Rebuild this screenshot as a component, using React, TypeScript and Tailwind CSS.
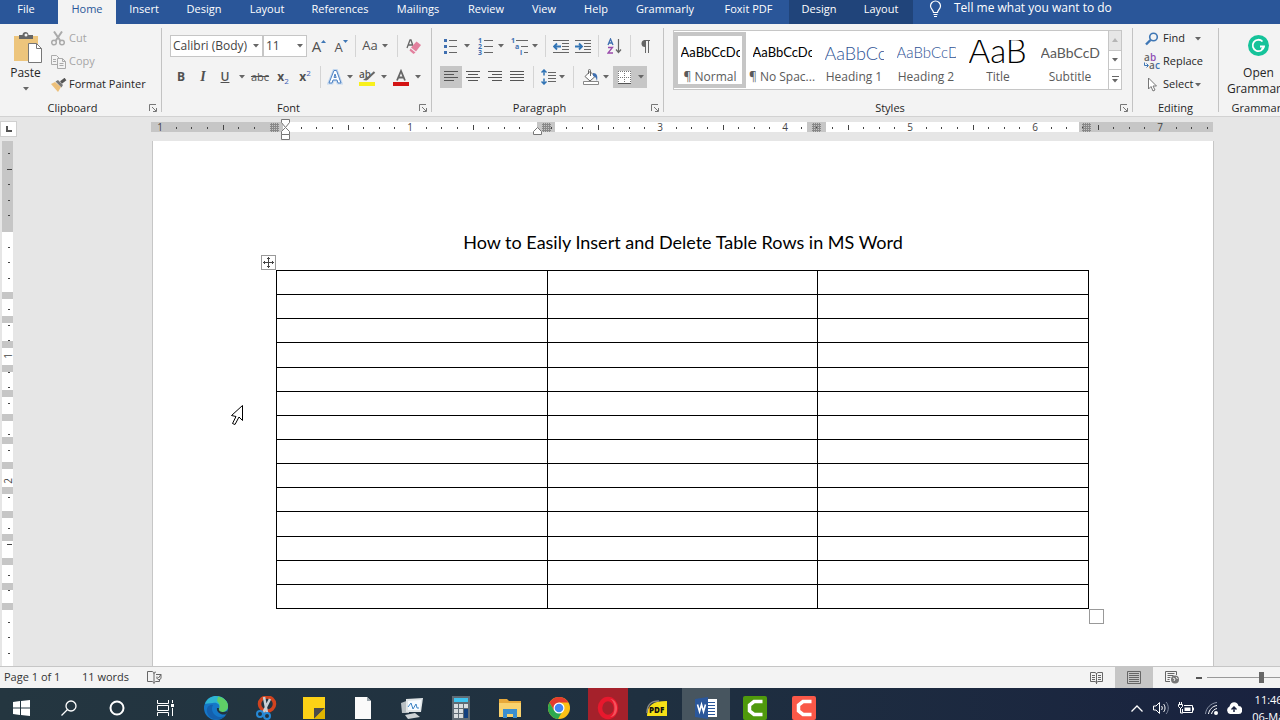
import type { ReactNode } from "react";
import clsx from "clsx";

const tabs = [
  { label: "File", width: "w-[52px]" },
  { label: "Home", width: "w-[58px] ml-1.5", active: true },
  { label: "Insert", width: "w-14" },
  { label: "Design", width: "w-16" },
  { label: "Layout", width: "w-[62px]" },
  { label: "References", width: "w-[84px]" },
  { label: "Mailings", width: "w-[72px]" },
  { label: "Review", width: "w-16" },
  { label: "View", width: "w-[52px]" },
  { label: "Help", width: "w-[52px]" },
  { label: "Grammarly", width: "w-[86px]" },
  { label: "Foxit PDF", width: "w-[81px]" },
];

const toolTabs = [
  { label: "Design", width: "w-[60px]" },
  { label: "Layout", width: "w-16" },
];

const styles = [
  { name: "¶ Normal", preview: "AaBbCcDc", look: "text-[13px] text-black", active: true },
  { name: "¶ No Spac...", preview: "AaBbCcDc", look: "text-[13px] text-black" },
  { name: "Heading 1", preview: "AaBbCc", look: "text-[18px] font-light text-[#2f5496]" },
  { name: "Heading 2", preview: "AaBbCcD", look: "text-[15px] font-light text-[#2f5496]" },
  { name: "Title", preview: "AaB", look: "pb-1.5 text-[33px] font-light text-black" },
  { name: "Subtitle", preview: "AaBbCcD", look: "text-[14px] text-[#5a5a5a]" },
];

const INCH = 125;

function Caret({ className }: { className?: string }) {
  return (
    <svg width="6" height="4" viewBox="0 0 6 4" className={className} aria-hidden="true">
      <path d="M0 0h6L3 3.6z" fill="#666" />
    </svg>
  );
}

function CaretButton({ label, width = "w-2" }: { label: string; width?: string }) {
  return (
    <button aria-label={label} className={clsx("flex h-full items-center justify-center", width)}>
      <Caret />
    </button>
  );
}

function Tool({
  label,
  width = "w-[22px]",
  active,
  children,
}: {
  label: string;
  width?: string;
  active?: boolean;
  children: ReactNode;
}) {
  return (
    <button
      aria-label={label}
      className={clsx(
        "flex h-full shrink-0 items-center justify-center text-xs text-[#505050]",
        width,
        active && "bg-[#c6c6c6]",
      )}
    >
      {children}
    </button>
  );
}

function Divider({ width = "w-2" }: { width?: string }) {
  return (
    <div className={clsx("flex h-full justify-center", width)}>
      <div className="w-px bg-[#d4d4d4]" />
    </div>
  );
}

function Group({
  title,
  width,
  launcher,
  children,
}: {
  title: string;
  width: string;
  launcher?: boolean;
  children: ReactNode;
}) {
  return (
    <section aria-label={title} className={clsx("flex h-full shrink-0", width)}>
      <div className="flex min-w-0 flex-1 flex-col">
        <div className="h-[76px]">{children}</div>
        <div className="flex h-4 items-center">
          <span className="flex-1 text-center whitespace-nowrap text-[#262626]">{title}</span>
          {launcher && (
            <button aria-label={`${title} settings`} className="flex w-4 justify-center">
              <svg width="9" height="9" viewBox="0 0 9 9" fill="none" stroke="#777">
                <path d="M.5 7V.5H7M3 3l4 4M7.5 4v3.5H4" />
              </svg>
            </button>
          )}
        </div>
      </div>
      <div className="my-1 w-px bg-[#c3c3c3]" />
    </section>
  );
}

function Lines({ rows }: { rows: [number, number][] }) {
  return (
    <svg width="16" height="12" viewBox="0 0 16 12" stroke="#555" aria-hidden="true">
      {rows.map(([from, to], i) => (
        <path key={i} d={`M${from} ${i * 3 + 0.5}H${to}`} />
      ))}
    </svg>
  );
}

function Combo({ label, value, width }: { label: string; value: string; width: string }) {
  return (
    <div className={clsx("relative h-[22px] text-xs", width)}>
      <select
        aria-label={label}
        className="h-full w-full appearance-none border border-[#c6c6c6] bg-white pl-0.5 text-[#444]"
      >
        <option>{value}</option>
      </select>
      <Caret className="pointer-events-none absolute top-[9px] right-1" />
    </div>
  );
}

function TabBar() {
  return (
    <nav className="flex h-6 shrink-0 overflow-hidden bg-[#2a5699] text-[11px] text-white">
      {tabs.map((tab) => (
        <button
          key={tab.label}
          className={clsx(
            "h-6 shrink-0 pb-[5px] text-center",
            tab.width,
            tab.active && "bg-[#f3f3f3] text-[#2a5699]",
          )}
        >
          {tab.label}
        </button>
      ))}
      <div className="flex bg-[#20447a]">
        {toolTabs.map((tab) => (
          <button key={tab.label} className={clsx("h-6 pb-[5px] text-center", tab.width)}>
            {tab.label}
          </button>
        ))}
      </div>
      <button className="flex h-6 items-start gap-3 pl-4 text-xs">
        <svg width="13" height="18" viewBox="0 0 13 18" fill="none" stroke="#fff" strokeWidth="1.200">
          <path d="M4.500 12.500c0-2.500-3-3.500-3-6.500a5 5 0 0 1 10 0c0 3-3 4-3 6.500zM4.500 14.500h4M5 16.500h3" />
        </svg>
        <span>Tell me what you want to do</span>
      </button>
    </nav>
  );
}

function Clipboard() {
  return (
    <Group title="Clipboard" width="w-[162px]" launcher>
      <div className="flex pt-[3px]">
        <button className="flex w-[51px] flex-col items-center pt-1 text-[#262626]">
          <svg width="30" height="32" viewBox="0 0 30 32" className="ml-0.5">
            <path d="M2 5h24v25H2z" fill="#edc57c" />
            <path d="M7 8V4h3.500c0-4 6-4 6 0H21v4z" fill="#666" />
            <circle cx="14" cy="4" r="1.500" fill="#f3f3f3" />
            <path d="M16.500 12.500h8l5 5v14h-13z" fill="#fff" stroke="#777" />
            <path d="M24.500 12.500v5h5" fill="none" stroke="#777" />
          </svg>
          <span className="mt-0.5 text-xs leading-4">Paste</span>
          <Caret className="mt-1.5" />
        </button>
        <div className="flex flex-col text-[#a6a6a6]">
          <button className="flex h-[23px] items-center gap-1">
            <svg width="14" height="15" viewBox="0 0 14 15" fill="none" stroke="#aaa" strokeWidth="1.500">
              <path d="M3 .5l6.500 9.500M11 .5L4.500 10" strokeWidth="2" />
              <circle cx="3" cy="11.500" r="2.300" />
              <circle cx="11" cy="11.500" r="2.300" />
            </svg>
            Cut
          </button>
          <button className="flex h-[23px] items-center gap-[3px]">
            <svg width="15" height="14" viewBox="0 0 15 14" fill="#f3f3f3" stroke="#aaa">
              <path d="M.5.5h5l3 3v6h-8zM2 4.500h3M2 6.500h3" />
              <path d="M6.500 3.500h5l3 3v7h-8zM11.500 3.500v3h3M8.500 8.500h4M8.500 10.500h4" />
            </svg>
            Copy
          </button>
          <button className="flex h-[23px] items-center gap-0.5 text-[#262626]">
            <svg width="16" height="14" viewBox="0 0 16 14">
              <path d="M0 6l4-2 6 5-3 5z" fill="#edc07a" />
              <path d="M4.500 3.500L7 2l5 5-1.500 2.500z" fill="#777" />
              <path d="M10 4.500L14.500 1" stroke="#555" strokeWidth="3" />
            </svg>
            Format Painter
          </button>
        </div>
      </div>
    </Group>
  );
}

function FontGroup() {
  return (
    <Group title="Font" width="w-[270px]" launcher>
      <div className="flex flex-col gap-[9px] pt-[11px] pl-2">
        <div className="flex h-[22px] items-center">
          <Combo label="Font" value="Calibri (Body)" width="w-[93px]" />
          <Combo label="Font size" value="11" width="w-11" />
          <Tool label="Grow font" width="w-6">
            <span className="text-[15px]">A</span>
            <svg width="5" height="14" viewBox="0 0 5 14">
              <path d="M0 4h5L2.500 1z" fill="#3f77b5" />
            </svg>
          </Tool>
          <Tool label="Shrink font" width="w-5">
            <span className="pt-1 text-[13px]">A</span>
            <svg width="5" height="14" viewBox="0 0 5 14">
              <path d="M0 1h5L2.500 4z" fill="#3f77b5" />
            </svg>
          </Tool>
          <Divider />
          <Tool label="Change case">
            <span className="text-[13px]">Aa</span>
          </Tool>
          <CaretButton label="Change case options" />
          <Divider width="w-4" />
          <Tool label="Clear formatting" width="w-4">
            <svg width="15" height="15" viewBox="0 0 15 15">
              <path d="M1 9l3-8h1l2 6M2 6h4" fill="none" stroke="#666" strokeWidth="1.300" />
              <path d="M10.500 2.500L15 6l-5 6.500-5-4z" fill="#e27f9d" />
              <path d="M4.500 9.500l5 4-2 1.500-4-3.500z" fill="#e27f9d" />
            </svg>
          </Tool>
        </div>
        <div className="flex h-[22px] items-center">
          <Tool label="Bold">
            <b>B</b>
          </Tool>
          <Tool label="Italic">
            <span className="font-['Liberation_Serif',serif] text-sm font-bold italic">I</span>
          </Tool>
          <Tool label="Underline">
            <span className="font-semibold underline">U</span>
          </Tool>
          <CaretButton label="Underline style" width="w-3" />
          <Tool label="Strikethrough" width="w-6">
            <span className="text-[11px] line-through">abc</span>
          </Tool>
          <Tool label="Subscript">
            <b>x</b>
            <span className="pt-2 text-[8px] text-[#3f60b5]">2</span>
          </Tool>
          <Tool label="Superscript">
            <b>x</b>
            <span className="pb-2 text-[8px] text-[#3f60b5]">2</span>
          </Tool>
          <Divider />
          <Tool label="Text effects">
            <svg width="16" height="16" viewBox="0 0 16 16">
              <path d="M7 1.500h2.500L14 14h-3l-1-3H6l-1 3H2zM8 5L7 8.500h2.200z" fill="none" stroke="#c3d7ee" strokeWidth="3" />
              <path d="M7 1.500h2.500L14 14h-3l-1-3H6l-1 3H2zM8 5L7 8.500h2.200z" fill="#fff" stroke="#4f83c4" />
            </svg>
          </Tool>
          <CaretButton label="Text effects options" />
          <Tool label="Text highlight color" width="w-[26px]">
            <svg width="17" height="17" viewBox="0 0 17 17">
              <text x="0" y="9" fontSize="10" fontWeight="600" fill="#555">ab</text>
              <path d="M15.500 3L8 10" stroke="#666" strokeWidth="2" />
              <path d="M4 11l4-3 1.500 2-2 1.500z" fill="#666" />
              <path d="M0 13h16v4H0z" fill="#f8f01c" />
            </svg>
          </Tool>
          <CaretButton label="Highlight options" />
          <Tool label="Font color" width="w-[26px]">
            <svg width="16" height="17" viewBox="0 0 16 17">
              <path d="M4 11.500L8 2l4 9.500M5.500 8.500h5" fill="none" stroke="#666" strokeWidth="1.800" />
              <path d="M0 13h16v4H0z" fill="#d31414" />
            </svg>
          </Tool>
          <CaretButton label="Font color options" />
        </div>
      </div>
    </Group>
  );
}

function Paragraph() {
  return (
    <Group title="Paragraph" width="w-[232px]" launcher>
      <div className="flex flex-col gap-[9px] pt-[11px] pl-2">
        <div className="flex h-[22px] items-center">
          <Tool label="Bullets">
            <svg width="14" height="16" viewBox="0 0 14 16">
              <path d="M5 2.500h8M5 8.500h8M5 14.500h8" stroke="#666" />
              <path d="M0 1h3v3H0zM0 7h3v3H0zM0 13h3v3H0z" fill="#3f6fb0" />
            </svg>
          </Tool>
          <CaretButton label="Bullet library" width="w-2.5 mr-0.5" />
          <Tool label="Numbering">
            <svg width="15" height="17" viewBox="0 0 15 17">
              <path d="M6 2.500h9M6 8.500h9M6 14.500h9" stroke="#666" />
              <g fontSize="7" fontWeight="700" fill="#3f6fb0">
                <text x="0" y="5">1</text>
                <text x="0" y="11">2</text>
                <text x="0" y="17">3</text>
              </g>
            </svg>
          </Tool>
          <CaretButton label="Numbering library" width="w-2.5 mr-0.5" />
          <Tool label="Multilevel list">
            <svg width="17" height="17" viewBox="0 0 17 17">
              <path d="M5 2.500h12M10 8.500h7M13 14.500h4" stroke="#666" />
              <g fontSize="7" fontWeight="700" fill="#3f6fb0">
                <text x="0" y="5">1</text>
                <text x="4" y="11">a</text>
                <text x="9" y="17">i</text>
              </g>
            </svg>
          </Tool>
          <CaretButton label="Multilevel library" width="w-2.5" />
          <Divider width="w-2.5" />
          <Tool label="Decrease indent">
            <svg width="16" height="13" viewBox="0 0 16 13">
              <path d="M0 .5h16M9 3.500h7M9 6.500h7M9 9.500h7M0 12.500h16" stroke="#666" />
              <path d="M8 6.500H1M4 3.500l-3 3 3 3" fill="none" stroke="#3174b5" strokeWidth="1.800" />
            </svg>
          </Tool>
          <Tool label="Increase indent">
            <svg width="16" height="13" viewBox="0 0 16 13">
              <path d="M0 .5h16M9 3.500h7M9 6.500h7M9 9.500h7M0 12.500h16" stroke="#666" />
              <path d="M0 6.500h7M4 3.500l3 3-3 3" fill="none" stroke="#3174b5" strokeWidth="1.800" />
            </svg>
          </Tool>
          <Divider />
          <Tool label="Sort" width="w-6">
            <svg width="15" height="16" viewBox="0 0 15 16">
              <path d="M1 7l2.500-6L6 7M2 5h3" fill="none" stroke="#3f6fb0" strokeWidth="1.300" />
              <path d="M1 9.500h4.500L1 15h5" fill="none" stroke="#9a4bab" strokeWidth="1.300" />
              <path d="M11.500 1v13M9 11.500l2.500 3 2.500-3" fill="none" stroke="#666" strokeWidth="1.200" />
            </svg>
          </Tool>
          <Divider />
          <Tool label="Show formatting marks">
            <svg width="10" height="13" viewBox="0 0 10 13">
              <path d="M5 7a3.500 3.500 0 0 1 0-7z" fill="#666" />
              <path d="M4 .5h6M5.500 0v13M8.500 0v13" stroke="#666" />
            </svg>
          </Tool>
        </div>
        <div className="flex h-[22px] items-center">
          <Tool label="Align left" active>
            <Lines rows={[[1, 15], [1, 11], [1, 15], [1, 11]]} />
          </Tool>
          <Tool label="Center">
            <Lines rows={[[1, 15], [3, 13], [1, 15], [3, 13]]} />
          </Tool>
          <Tool label="Align right">
            <Lines rows={[[1, 15], [5, 15], [1, 15], [5, 15]]} />
          </Tool>
          <Tool label="Justify">
            <Lines rows={[[1, 15], [1, 15], [1, 15], [1, 15]]} />
          </Tool>
          <Divider width="w-2.5" />
          <Tool label="Line spacing" width="w-5">
            <svg width="15" height="16" viewBox="0 0 15 16">
              <path d="M7 3.500h8M7 6.500h8M7 9.500h8M7 12.500h8" stroke="#666" />
              <path d="M3 1v5.500M.5 3.500L3 1l2.500 2.500M3 9.500V15M.5 12.500L3 15l2.500-2.500" fill="none" stroke="#3174b5" strokeWidth="1.500" />
            </svg>
          </Tool>
          <CaretButton label="Line spacing options" />
          <Divider width="w-3.5" />
          <Tool label="Shading">
            <svg width="18" height="16" viewBox="0 0 18 16">
              <path d="M3 7.500L8 2.500l5 5-5 4.500z" fill="#fff" stroke="#666" />
              <path d="M6.500 5V1.500c0-1.500 2-1.500 2 0V7" fill="none" stroke="#666" />
              <path d="M11 4c4 0 5 3 4 8-1-3-1-4-4-5z" fill="#3f6fb0" />
              <path d="M1.500 12.500h15v3h-15z" fill="#fff" stroke="#888" />
            </svg>
          </Tool>
          <CaretButton label="Shading options" />
          <div className="ml-[3px] flex h-full items-center bg-[#c6c6c6]">
            <Tool label="Borders">
              <svg width="13" height="13" viewBox="0 0 13 13">
                <path d="M0 0h13v13H0z" fill="#fff" />
                <path d="M.5 0v12M12.500 0v12M6.500 0v12M0 .5h13M0 6.500h13" stroke="#777" strokeDasharray="1 1" />
                <path d="M0 12.500h13" stroke="#555" />
              </svg>
            </Tool>
            <CaretButton label="Border options" width="w-3" />
          </div>
        </div>
      </div>
    </Group>
  );
}

function Styles() {
  return (
    <Group title="Styles" width="w-[469px]" launcher>
      <div className="mt-1.5 mr-2.5 ml-[9px] flex h-[60px] border border-[#c6c6c6] bg-white text-xs">
        {styles.map((s) => (
          <button
            key={s.name}
            className={clsx(
              "my-px flex w-[72px] flex-col items-center border-4",
              s.active ? "border-[#c6c6c6]" : "border-transparent",
            )}
          >
            <span
              className={clsx(
                "mt-1 flex h-[26px] w-[59px] shrink-0 items-center overflow-hidden whitespace-nowrap font-['Lato',sans-serif]",
                s.look,
              )}
            >
              {s.preview}
            </span>
            <span className="mt-1 leading-[14px] whitespace-nowrap text-[#5a5a5a]">{s.name}</span>
          </button>
        ))}
        <div className="ml-0.5 flex flex-1 flex-col divide-y divide-[#c6c6c6] border-l border-[#c6c6c6]">
          <button aria-label="Scroll up" className="flex flex-1 items-center justify-center bg-[#e6e6e6]">
            <svg width="6" height="4" viewBox="0 0 6 4">
              <path d="M0 4h6L3 0z" fill="#b5b5b5" />
            </svg>
          </button>
          <button aria-label="Scroll down" className="flex flex-1 items-center justify-center">
            <Caret />
          </button>
          <button aria-label="More styles" className="flex flex-1 flex-col items-center justify-center gap-0.5">
            <span className="h-px w-[7px] bg-[#666]" />
            <Caret />
          </button>
        </div>
      </div>
    </Group>
  );
}

function Editing() {
  return (
    <Group title="Editing" width="w-[86px]">
      <div className="flex flex-col pt-[3px] pl-2.5 text-[#262626]">
        <button className="flex h-[23px] items-center">
          <svg width="20" height="14" viewBox="0 0 20 14" fill="none" stroke="#3f77b5">
            <circle cx="10.500" cy="5" r="3.800" strokeWidth="1.600" />
            <path d="M7.500 8L3 12.500" strokeWidth="2.400" />
          </svg>
          Find
          <Caret className="ml-2.5" />
        </button>
        <button className="flex h-[23px] items-center">
          <svg width="20" height="17" viewBox="0 0 20 17" fontSize="10" fontWeight="600">
            <text x="1" y="8" fill="#666">a</text>
            <text x="7" y="8" fill="#8f4fb5">b</text>
            <text x="6" y="16" fill="#666">a</text>
            <text x="12" y="16" fill="#3f77b5">c</text>
            <path d="M1.500 9.500v3H5M3.500 10.500l2 2-2 2" fill="none" stroke="#3f77b5" />
          </svg>
          Replace
        </button>
        <button className="flex h-[23px] items-center">
          <svg width="20" height="15" viewBox="0 0 20 15">
            <path d="M5.500 1v11l2.500-2.500 2 4.500 2-1-2-4h3.500z" fill="#fff" stroke="#777" />
          </svg>
          Select
          <Caret className="ml-0.5" />
        </button>
      </div>
    </Group>
  );
}

function GrammarlyGroup() {
  return (
    <Group title="Grammarly" width="w-[84px]">
      <button className="flex w-[79px] flex-col items-center pt-[11px] text-xs leading-4 text-[#262626]">
        <svg width="21" height="21" viewBox="0 0 21 21" fill="none" stroke="#fff">
          <circle cx="10.500" cy="10.500" r="10.500" fill="#15c39a" stroke="none" />
          <path d="M14.500 6.500a5.700 5.700 0 1 0 1.500 5h-4" strokeWidth="1.800" />
          <path d="M13.500 14.500l2.500-3" strokeWidth="1.500" />
        </svg>
        <span className="mt-[9px]">Open</span>
        <span>Grammarly</span>
      </button>
    </Group>
  );
}

function range(from: number, to: number) {
  return Array.from({ length: to - from + 1 }, (_, i) => from + i);
}

// Eighth-inch marks between the numbers, longer at the half inch
function HorizontalRuler() {
  const zero = 268;
  return (
    <svg className="h-6 flex-1 text-[10px]" fill="#444" aria-label="Horizontal ruler">
      <path d="M134 5h1062v10H134z" fill="#fff" />
      <path d="M134 5h132v10H134zM520 5h18v10h-18zM790 5h19v10h-19zM1062 5h134v10h-134z" fill="#c6c6c6" />
      {range(-8, 59).map((n) => {
        const x = Math.round(zero + (n * INCH) / 8);
        if (n === 0 || n === -1 || n === 16) return null;
        if (n % 8 === 0) {
          return (
            <text key={n} x={x} y="14" textAnchor="middle">
              {Math.abs(n / 8)}
            </text>
          );
        }
        return n % 4 === 0 ? (
          <rect key={n} x={x} y="8" width="1" height="5" />
        ) : (
          <rect key={n} x={x} y="10" width="1" height="2" />
        );
      })}
      {[253, 525, 795, 1065].map((x) => (
        <path
          key={x}
          d={`M${x} 7.500h9M${x} 9.500h9M${x} 11.500h9M${x} 13.500h9M${x + 1.5} 6v9M${x + 3.5} 6v9M${x + 5.5} 6v9M${x + 7.5} 6v9`}
          stroke="#888"
        />
      ))}
      <g fill="#fff" stroke="#777">
        <path d="M264.500 2.500h8v3l-4 5-4-5z" />
        <path d="M264.500 17.500v-3l4-4 4 4v3z" />
        <path d="M264.500 17.500h8v5h-8z" />
        <path d="M516.500 17.500v-3l4-4 4 4v3z" />
      </g>
    </svg>
  );
}

function VerticalRuler() {
  const zero = 90;
  const bands = [151, 175, 200, 224, 249, 273, 296, 321, 346, 370, 393, 417, 442, 462];
  return (
    <svg className="h-full w-5 shrink-0 text-[10px]" fill="#444" aria-label="Vertical ruler">
      <path d="M2 0h11v600H2z" fill="#fff" />
      <path d="M2 0h11v91H2z" fill="#c6c6c6" />
      {range(-5, 33).map((n) => {
        const y = Math.round(zero + (n * INCH) / 8);
        if (n === 0 || n === 24) return null;
        if (n % 8 === 0) {
          return (
            <text key={n} textAnchor="middle" transform={`translate(12 ${y}) rotate(-90)`}>
              {n / 8}
            </text>
          );
        }
        return n % 4 === 0 ? (
          <rect key={n} x="7" y={y} width="5" height="1" />
        ) : (
          <rect key={n} x="8" y={y} width="2" height="1" />
        );
      })}
      {bands.map((y) => (
        <rect key={y} x="2" y={y} width="11" height="7" fill="#c6c6c6" />
      ))}
    </svg>
  );
}

function Page() {
  return (
    <main className="mr-[66px] ml-[132px] flex-1 border-x border-[#c6c6c6] bg-white pt-[89px]">
      <h1 className="text-center font-['Lato',sans-serif] text-lg leading-6 text-black">
        How to Easily Insert and Delete Table Rows in MS Word
      </h1>
      <div className="relative mt-4 mr-[124px] ml-[123px]">
        <button
          aria-label="Move table"
          className="absolute -top-[15px] -left-[15px] flex size-[15px] items-center justify-center border border-[#999] bg-white"
        >
          <svg width="11" height="11" viewBox="0 0 11 11" fill="none" stroke="#444">
            <path d="M5.500 0v11M0 5.500h11M4 2l1.500-1.500L7 2M4 9l1.500 1.500L7 9M2 4L.5 5.500 2 7M9 4l1.500 1.500L9 7" />
          </svg>
        </button>
        <table className="h-[339px] w-full table-fixed border-collapse">
          <tbody>
            {range(1, 14).map((row) => (
              <tr key={row}>
                {range(1, 3).map((col) => (
                  <td key={col} className="border border-black p-0" />
                ))}
              </tr>
            ))}
          </tbody>
        </table>
        <button
          aria-label="Resize table"
          className="absolute -right-[15px] -bottom-[15px] size-[15px] border border-[#999] bg-white"
        />
        <svg width="13" height="21" viewBox="0 0 13 21" className="absolute top-[135px] -left-[45px]">
          <path d="M11.500.5v15L8 12l-4 7.500-2.500-1L5 11.500.500 10.500z" fill="#fff" stroke="#000" />
        </svg>
      </div>
    </main>
  );
}

function StatusBar() {
  return (
    <footer className="flex h-[22px] shrink-0 items-center overflow-hidden border-t border-[#c6c6c6] bg-[#f3f3f3] pl-1 text-[11px] text-[#333]">
      <span className="w-[78px]">Page 1 of 1</span>
      <span className="w-[65px]">11 words</span>
      <button aria-label="Proofing">
        <svg width="15" height="13" viewBox="0 0 15 13" fill="none" stroke="#666">
          <path d="M9 1.500c-1-1-2 0-2 1 0-1-1-2-2-2H.5v10H5c1 0 2 1 2 2 0-1 1-2 2-2h3.500V8" />
          <path d="M7 2v9M9 3.500h5v4L12 9 9 6.500M10 5.500l1.500 1.500L14 3.500" />
        </svg>
      </button>
      <div className="ml-auto flex h-full shrink-0 items-center">
        <button aria-label="Read mode" className="flex h-full w-[38px] items-center justify-center">
          <svg width="13" height="13" viewBox="0 0 13 13" fill="none" stroke="#666">
            <path d="M.5 1.500H5l1.500 1L8 1.500h4.500v9H8l-1.500 1-1.500-1H.5zM6.500 2v11M2 4.500h3M2 6.500h3M2 8.500h3M8 4.500h3M8 6.500h3M8 8.500h3" />
          </svg>
        </button>
        <button aria-label="Print layout" className="flex h-full w-[38px] items-center justify-center bg-[#c6c6c6]">
          <svg width="14" height="13" viewBox="0 0 14 13" fill="none" stroke="#666">
            <path d="M.5.5h13v12H.5zM2 2.500h10M2 4.500h10M2 6.500h10M2 8.500h10M2 10.500h10" />
          </svg>
        </button>
        <button aria-label="Web layout" className="flex h-full w-[38px] items-center justify-center">
          <svg width="14" height="13" viewBox="0 0 14 13" fill="none" stroke="#666">
            <path d="M5 10.500H.5V.5h11V4M2.500 2.500h7M2.500 4.500h6M2.500 6.500h3M2.500 8.500h2" />
            <circle cx="10" cy="8.500" r="4" fill="#777" stroke="none" />
            <path d="M8 7l2 1-1 2M11 6l1.500 2" stroke="#f3f3f3" />
          </svg>
        </button>
        <button aria-label="Zoom out" className="flex h-full w-4 items-center justify-center">
          <span className="h-0.5 w-1.5 bg-[#555]" />
        </button>
        <input
          type="range"
          aria-label="Zoom"
          defaultValue={50}
          className="-mr-[35px] h-4 w-[108px] appearance-none bg-transparent [&::-webkit-slider-runnable-track]:h-px [&::-webkit-slider-runnable-track]:bg-[#999] [&::-webkit-slider-thumb]:-mt-[5px] [&::-webkit-slider-thumb]:h-[11px] [&::-webkit-slider-thumb]:w-[5px] [&::-webkit-slider-thumb]:appearance-none [&::-webkit-slider-thumb]:bg-[#666]"
        />
      </div>
    </footer>
  );
}

const apps: { name: string; icon: ReactNode; className?: string }[] = [
  {
    name: "Edge",
    icon: (
      <>
        <circle cx="12" cy="12" r="12" fill="#1577c8" />
        <path d="M1 8C3 2 8 0 12 0c7 0 12 5 12 10 0 4-3 6-6 6-2 0-4-1-3-3 2-5-3-7-6-6-4 0-7 1-8 1z" fill="#2fb5d2" />
        <path d="M14 .5c6 1 10 5 10 9.500 0 4-3 6-6 6-2 0-4-1-3-3 2-3 0-6-2-8z" fill="#5fcf66" />
        <path d="M9 9c-3 5 1 12 8 12 2 0 4-1 5-2-5 7-17 6-19-3C2 11 6 8 9 9z" fill="#1460ae" />
        <path d="M15 12c-1 3 2 4 4 4 3 0 4-1 5-2l-1.500 4c-5 2-10.500-2-9.500-6z" fill="#223340" />
      </>
    ),
  },
  {
    name: "Snipping Tool",
    icon: (
      <>
        <ellipse cx="14" cy="8" rx="7.500" ry="7" fill="none" stroke="#d1431f" strokeWidth="3.500" />
        <path d="M11 1l3 16M17 3l-7 14" stroke="#c9d0d5" strokeWidth="2.500" />
        <circle cx="7" cy="18" r="3" fill="none" stroke="#2689d6" strokeWidth="2" />
        <circle cx="14" cy="20" r="3" fill="none" stroke="#2689d6" strokeWidth="2" />
      </>
    ),
  },
  {
    name: "Sticky Notes",
    icon: (
      <>
        <path d="M1 1h22v22H1z" fill="#fcd116" />
        <path d="M12 12h11L12 23z" fill="#4a4a4a" />
        <path d="M23 12v11H12z" fill="#e0b400" />
      </>
    ),
  },
  {
    name: "Document",
    icon: (
      <>
        <path d="M4 1h12l4 4v18H4z" fill="#fafafa" />
        <path d="M16 1v4h4z" fill="#9aa4ab" />
      </>
    ),
  },
  {
    name: "Resource Monitor",
    icon: (
      <>
        <path d="M1 7l8-3v13H2z" fill="#b9c0c4" />
        <path d="M6 3l17-1-2 14H6z" fill="#e1e5e7" />
        <path d="M8 5l13-1-1 10H8z" fill="#f7fbff" />
        <path d="M8 11l3-4 2 6 3-5 1 4h2" fill="none" stroke="#3b82c4" />
        <path d="M5 19l10-2 5 4-12 2z" fill="#cdd2d5" />
      </>
    ),
  },
  {
    name: "Calculator",
    icon: (
      <>
        <path d="M3 0h18v24H3z" fill="#5f6b75" />
        <path d="M5 2h14v4H5z" fill="#3fc4f0" />
        <path d="M5 8h4v4H5zM10 8h4v4h-4zM15 8h4v4h-4zM5 13h4v4H5zM10 13h4v4h-4zM5 18h4v4H5zM10 18h4v4h-4z" fill="#d8dde0" />
        <path d="M15 13h4v9h-4z" fill="#12407f" />
      </>
    ),
  },
  {
    name: "File Explorer",
    icon: (
      <>
        <path d="M1 3h8l2 2h12v16H1z" fill="#e8a93a" />
        <path d="M1 7h22v14H1z" fill="#f9d26e" />
        <path d="M5 22v-9h14v9h-4v-4H9v4z" fill="#3b8fd0" />
      </>
    ),
  },
  {
    name: "Chrome",
    icon: (
      <>
        <circle cx="12" cy="12" r="11" fill="#fbc116" />
        <path d="M12 6.500h9.500a11 11 0 0 0-19 0L7 14.500z" fill="#e33b2e" />
        <path d="M2.500 6.500A11 11 0 0 0 11 23l5-8.500-9 0z" fill="#2da94f" />
        <circle cx="12" cy="12" r="5.500" fill="#fff" />
        <circle cx="12" cy="12" r="4.300" fill="#4285f4" />
      </>
    ),
  },
  {
    name: "Opera",
    className: "bg-[#a5212b]",
    icon: (
      <>
        <ellipse cx="12" cy="12" rx="8" ry="9" fill="none" stroke="#e8182d" strokeWidth="4.500" />
        <path d="M14 3c6 2 6 16 0 18 10 0 9-18 0-18z" fill="#f5525c" />
      </>
    ),
  },
  {
    name: "PDF",
    icon: (
      <>
        <path d="M2 20C2 9 8 5 22 5v15z" fill="#f7e017" />
        <path d="M2 17C2 8 6 5 14 5" fill="none" stroke="#888" strokeWidth="1.500" />
        <text x="4" y="17" fontSize="8" fontWeight="900" fill="#111">PDF</text>
      </>
    ),
  },
  {
    name: "Word",
    className: "bg-[#47555f]",
    icon: (
      <>
        <path d="M12 3h11v18H12z" fill="#fff" />
        <path d="M14 6.500h7M14 9.500h7M14 12.500h7M14 15.500h7M14 18.500h7" stroke="#2b579a" />
        <path d="M1 3l13-2v22L1 21z" fill="#2b579a" />
        <path d="M3.500 8.500l2 7 2-7 2 7 2-7" fill="none" stroke="#fff" strokeWidth="1.600" />
      </>
    ),
  },
  {
    name: "Camtasia",
    icon: (
      <>
        <rect width="24" height="24" rx="2" fill="#4f9a0c" />
        <path d="M19.500 5.500H11L6.500 9v6l4.500 3.500h8.500" fill="none" stroke="#fff" strokeWidth="3.500" />
      </>
    ),
  },
  {
    name: "Camtasia Recorder",
    icon: (
      <>
        <rect width="24" height="24" rx="2" fill="#fa5848" />
        <path d="M19.500 5.500H11L6.500 9v6l4.500 3.500h8.500" fill="none" stroke="#fff" strokeWidth="3.500" />
      </>
    ),
  },
];

function Taskbar() {
  return (
    <div className="flex h-8 shrink-0 overflow-hidden bg-linear-to-r from-[#243640] via-[#1f3040] to-[#19223f] text-white">
      <div className="flex h-10 items-center">
        <button aria-label="Start" className="flex w-[45px] justify-center pr-0.5">
          <svg width="17" height="16" viewBox="0 0 17 16" fill="#fff">
            <path d="M0 2l7-1v6.500H0zM8 1l9-1v7.500H8zM0 8.500h7V15l-7-1zM8 8.500h9V16l-9-1z" />
          </svg>
        </button>
        <button aria-label="Search" className="flex w-12 justify-center">
          <svg width="16" height="16" viewBox="0 0 16 16" fill="none" stroke="#fff" strokeWidth="1.300">
            <circle cx="10" cy="6" r="5" />
            <path d="M6.500 9.500L.5 15.500" />
          </svg>
        </button>
        <button aria-label="Cortana" className="flex w-12 justify-center">
          <svg width="16" height="16" viewBox="0 0 16 16" fill="none" stroke="#fff" strokeWidth="2">
            <circle cx="8" cy="8" r="6.500" />
          </svg>
        </button>
        <button aria-label="Task view" className="mr-0.5 flex w-12 justify-center">
          <svg width="17" height="16" viewBox="0 0 17 16" fill="none" stroke="#fff">
            <path d="M.5 0v3.500h11V0M.5 16v-3.500h11V16M.5 5.500h11v5H.5zM15.500 0v3M15.500 8v8" />
            <path d="M14 4h3v3h-3z" fill="#fff" stroke="none" />
          </svg>
        </button>
        {apps.map((app) => (
          <button key={app.name} aria-label={app.name} className="flex h-10 w-[49px] justify-center">
            <span
              className={clsx(
                "flex h-full items-center justify-center",
                app.name === "Opera" ? "w-10" : "w-12",
                app.className,
              )}
            >
              <svg width="24" height="24" viewBox="0 0 24 24">
                {app.icon}
              </svg>
            </span>
          </button>
        ))}
      </div>
      <div className="ml-auto flex h-10 shrink-0 items-center">
        <button aria-label="Hidden icons" className="flex w-6 justify-center">
          <svg width="12" height="7" viewBox="0 0 12 7" fill="none" stroke="#fff" strokeWidth="1.300">
            <path d="M.5 6.500L6 1l5.500 5.500" />
          </svg>
        </button>
        <button aria-label="Volume" className="flex w-6 justify-center">
          <svg width="16" height="14" viewBox="0 0 16 14" fill="none" stroke="#fff">
            <path d="M.5 5h2.500L6.500 1.500v11L3 9H.5zM8.500 5c1 1 1 3 0 4M10.500 3c2 2 2 6 0 8" />
            <path d="M13 1c3 3 3 9 0 12" stroke="#7d879c" />
          </svg>
        </button>
        <button aria-label="Battery" className="flex w-[26px] justify-center">
          <svg width="17" height="13" viewBox="0 0 17 13" fill="none" stroke="#fff">
            <path d="M6 3.500h8.500v7h-10V7M15.500 5.500v3M.5 2.500h4v2l-2 2-2-2zM1.500 0v2M3.500 0v2M2.500 6v5H5" />
            <path d="M6.500 5.500h6v3.500h-6z" fill="#fff" stroke="none" />
          </svg>
        </button>
        <button aria-label="Network" className="flex w-6 justify-center">
          <svg width="13" height="13" viewBox="0 0 13 13" fill="none" stroke="#fff">
            <path d="M.5 12C1 6 6 1 12 .5" stroke="#8c95a8" />
            <path d="M3.500 12c.5-4 4-8 8.500-8.500M6.500 12c.5-3 3-5 5.500-5.500" />
            <circle cx="11" cy="11" r="2" fill="#fff" stroke="none" />
          </svg>
        </button>
        <button aria-label="Cloud sync" className="flex w-[22px] justify-center">
          <svg width="16" height="12" viewBox="0 0 16 12">
            <path d="M4 12a4 4 0 0 1-.5-7.500C4.500-1.500 12-1 12.500 4A4 4 0 0 1 12 12z" fill="#fff" />
            <path d="M8 10V6M5.500 7.500L8 5l2.500 2.500" fill="none" stroke="#19223f" strokeWidth="1.500" />
          </svg>
        </button>
        <div className="-mr-8 w-[67px] text-center text-[11px] leading-[17px] whitespace-nowrap">
          <div>11:46 AM</div>
          <div>06-Mar-21</div>
        </div>
      </div>
    </div>
  );
}

export default function App() {
  return (
    <div className="flex h-screen flex-col overflow-hidden bg-[#e6e6e6] font-['Open_Sans','Noto_Sans',sans-serif] text-xs">
      <TabBar />
      <header className="flex h-[93px] shrink-0 overflow-hidden border-b border-[#d2d2d2] bg-[#f3f3f3] text-[11px]">
        <Clipboard />
        <FontGroup />
        <Paragraph />
        <Styles />
        <Editing />
        <GrammarlyGroup />
      </header>
      <div className="flex h-6 shrink-0 items-center">
        <button
          aria-label="Tab stop"
          className="flex h-4 w-[17px] items-center justify-center border border-[#d0d0d0] bg-white"
        >
          <span className="size-[6px] border-b-2 border-l-2 border-[#555]" />
        </button>
        <HorizontalRuler />
      </div>
      <div className="flex min-h-0 flex-1 overflow-hidden">
        <VerticalRuler />
        <Page />
      </div>
      <StatusBar />
      <Taskbar />
    </div>
  );
}
